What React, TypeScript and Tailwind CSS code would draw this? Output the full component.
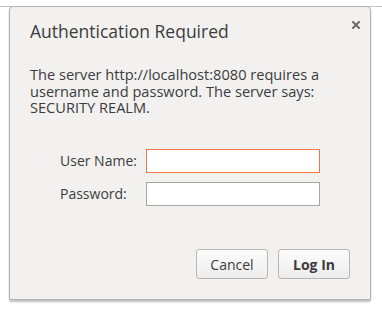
export default function App() {
    return (
        <div className="w-[382px] h-[310px] bg-white pt-[6px] font-['Open_Sans',sans-serif] text-[#3c3c3c]">
            <div className="border-t border-[#c6c6c6]">
                <div className="relative ml-[9px] w-[362px] h-[294px] -mt-px bg-[#f2f1f0] border border-[#b4b4b4] rounded-t-[4px] rounded-b-[2px] shadow-[0_2px_2px_rgba(0,0,0,0.25)] px-[20px] flex flex-col">
                    <button className="absolute right-[8px] top-[12px] w-[12px] h-[12px] flex items-center justify-center">
                        <svg width="8" height="8" viewBox="0 0 8 8">
                            <path d="M1 1L7 7M7 1L1 7" stroke="#6b6b6b" strokeWidth="2" strokeLinecap="square" />
                        </svg>
                    </button>

                    <h1 className="mt-[12px] text-[17.5px] leading-[24px]">Authentication Required</h1>

                    <p className="mt-[23px] text-[14.6px] leading-[16.5px]">
                        The server http://localhost:8080 requires a<br />
                        username and password. The server says:<br />
                        SECURITY REALM.
                    </p>

                    <div className="mt-[33px] ml-[30px] grid grid-cols-[86px_174px] gap-y-[9px] items-center text-[14px]">
                        <label>User Name:</label>
                        <input className="h-[24px] bg-white border border-[#f07746] outline-none" />
                        <label>Password:</label>
                        <input type="password" className="h-[24px] bg-white border border-[#a5a5a5] outline-none" />
                    </div>

                    <div className="mt-auto mb-[20px] flex justify-end gap-[10px] text-[14px]">
                        <button className="w-[72px] h-[30px] rounded-[3px] border border-[#b6b6b6] bg-gradient-to-b from-[#fdfdfd] to-[#ececec]">
                            Cancel
                        </button>
                        <button className="w-[72px] h-[30px] rounded-[3px] border border-[#b6b6b6] bg-gradient-to-b from-[#fdfdfd] to-[#ececec] font-bold">
                            Log In
                        </button>
                    </div>
                </div>
            </div>
        </div>
    );
}
